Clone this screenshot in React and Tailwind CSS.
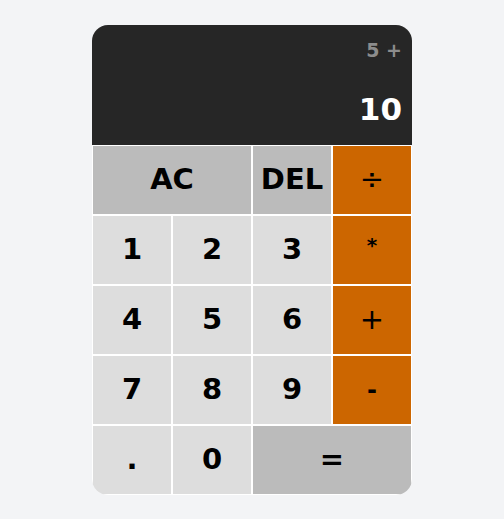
import { useState } from 'react';

// calculadora simple: pantalla + rejilla de botones
export default function App() {
    const [prev] = useState('5 +');
    const [current] = useState('10');

    const btn = 'border border-white flex items-center justify-center text-[29px] font-bold text-black cursor-pointer';
    const digit = `${btn} bg-[#dddddd]`;
    const gray = `${btn} bg-[#bbbbbb]`;
    const orange = `${btn} bg-[#cc6600]`;

    return (
        <div
            className="min-h-screen bg-[#f3f4f6] flex items-center justify-center"
            style={{ fontFamily: '"DejaVu Sans", Verdana, sans-serif' }}
        >
            <div className="w-[320px] rounded-2xl overflow-hidden grid grid-cols-4 grid-rows-[120px_repeat(5,70px)]">
                <div className="col-span-4 bg-[#262626] flex flex-col items-end justify-between px-[10px] pt-[16px] pb-[20px]">
                    <div className="text-[19px] font-bold text-[#8c8c8c] leading-none">{prev}</div>
                    <div className="text-[31px] font-bold text-white leading-none">{current}</div>
                </div>
                <button className={`${gray} col-span-2`}>AC</button>
                <button className={gray}>DEL</button>
                <button className={`${orange} text-[26px] font-normal`}>÷</button>
                <button className={digit}>1</button>
                <button className={digit}>2</button>
                <button className={digit}>3</button>
                <button className={orange}>
                    <span className="text-[20px] -translate-y-[5px]">*</span>
                </button>
                <button className={digit}>4</button>
                <button className={digit}>5</button>
                <button className={digit}>6</button>
                <button className={`${orange} font-normal`}>+</button>
                <button className={digit}>7</button>
                <button className={digit}>8</button>
                <button className={digit}>9</button>
                <button className={orange}>
                    <span className="text-[24px]">-</span>
                </button>
                <button className={digit}>.</button>
                <button className={digit}>0</button>
                <button className={`${gray} col-span-2`}>=</button>
            </div>
        </div>
    );
}
